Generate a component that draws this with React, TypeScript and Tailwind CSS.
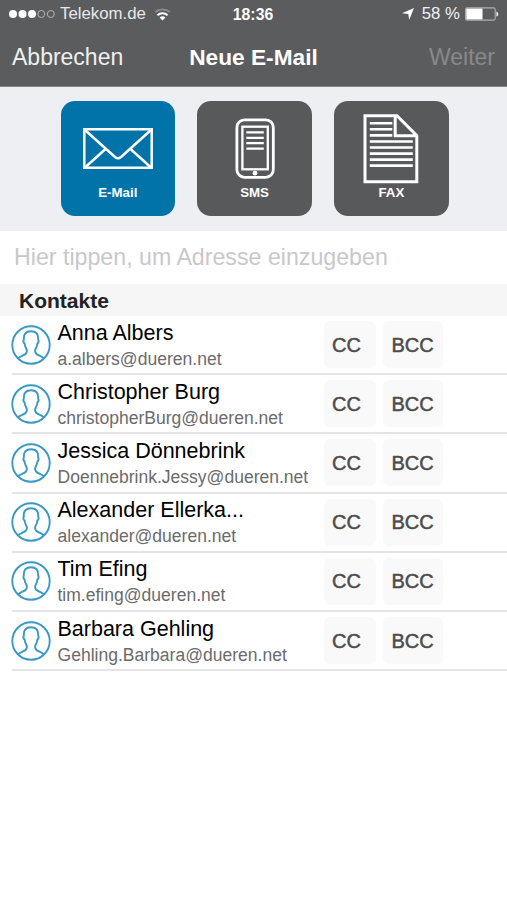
import clsx from 'clsx';

const contacts = [
  { name: 'Anna Albers', email: 'a.albers@dueren.net' },
  { name: 'Christopher Burg', email: 'christopherBurg@dueren.net' },
  { name: 'Jessica Dönnebrink', email: 'Doennebrink.Jessy@dueren.net' },
  { name: 'Alexander Ellerka...', email: 'alexander@dueren.net' },
  { name: 'Tim Efing', email: 'tim.efing@dueren.net' },
  { name: 'Barbara Gehling', email: 'Gehling.Barbara@dueren.net' },
];

const SignalDots = () => (
  <svg width="46" height="10" viewBox="0 0 46 10" fill="none">
    <circle cx="4" cy="5" r="4" fill="#fff" />
    <circle cx="13.5" cy="5" r="4" fill="#fff" />
    <circle cx="23" cy="5" r="4" fill="#fff" />
    <circle cx="32.3" cy="5" r="3.5" stroke="#b5b5b7" />
    <circle cx="41.8" cy="5" r="3.5" stroke="#b5b5b7" />
  </svg>
);

const WifiIcon = () => (
  <svg width="17" height="13" viewBox="0 0 17 13" fill="none">
    <path d="M1 4.2a11.2 11.2 0 0 1 15 0" stroke="#8c8c8e" strokeWidth="1.8" />
    <path d="M3.4 7.2a7.4 7.4 0 0 1 10.2 0" stroke="#fff" strokeWidth="2" />
    <path d="M5.6 9.6a4.200 4.200 0 0 1 5.800 0L8.500 12.600z" fill="#fff" />
  </svg>
);

const LocationIcon = () => (
  <svg width="12" height="12" viewBox="0 0 12 12">
    <path d="M12 0 7.200 12 6.300 5.900 0 5.200z" fill="#fff" />
  </svg>
);

const BatteryIcon = () => (
  <svg width="34" height="14" viewBox="0 0 34 14" fill="none">
    <rect x="0.6" y="0.9" width="29.6" height="12.2" rx="1.5" stroke="#b0b0b2" strokeWidth="1.1" />
    <rect x="1.3" y="1.6" width="16.2" height="10.8" fill="#fff" />
    <path d="M31.5 4.4c2.2.9 2.2 4.3 0 5.2z" fill="#fff" />
  </svg>
);

const MailIcon = () => (
  <svg width="70" height="84" viewBox="0 0 70 84" fill="none" stroke="#fff" strokeWidth="2.5">
    <path d="M1.3 28.3h67.4v38.4H1.3z" />
    <path d="M2 29 32 56q3 2.4 6 0L68 29M2 66.5 22.5 48M68 66.5 47.5 48" />
  </svg>
);

const PhoneIcon = () => (
  <svg width="40" height="84" viewBox="0 0 40 84" fill="none" stroke="#fff">
    <rect x="1.9" y="18.9" width="36.4" height="57.4" rx="7.5" strokeWidth="2.8" />
    <rect x="7.4" y="25.7" width="25.4" height="42.6" strokeWidth="2.3" />
    <path d="M11.3 31.4h17.5M11.3 36.8h17.5M11.3 42.2h17.5M11.3 47.6h17.5" strokeWidth="2.3" />
    <circle cx="20" cy="72.2" r="2.4" fill="#fff" stroke="none" />
  </svg>
);

const FaxIcon = () => (
  <svg width="56" height="84" viewBox="0 0 56 84" fill="none" stroke="#fff" strokeWidth="3">
    <path d="M2 14.7h32L53.8 34.7v46H2z" />
    <path d="M32.2 14.7v20h21" />
    <path
      d="M6.8 22.3h22.5M6.8 28.3h22.5M6.8 34.4h22.5M6.8 40.5h43M6.8 46.5h43M6.8 52.6h43M6.8 58.6h43M6.8 64.6h43"
      strokeWidth="2.6"
    />
  </svg>
);

const AvatarIcon = () => (
  <svg
    width="40"
    height="40"
    viewBox="0 0 40 40"
    fill="none"
    stroke="#3a98c6"
    strokeWidth="1.9"
    className="shrink-0"
  >
    <circle cx="20" cy="20" r="18.7" />
    <path d="M6.8 33.3c2.600-2 6.800-3.200 8.200-4.800 1.400-1.700.9-4-.1-5.700-.8-1.300-1.200-2.800-1.300-4.300-1.400-1-1.300-3-.8-4.200C12.300 8.800 15.200 6.300 20 6.300s7.700 2.500 7.200 8c.5 1.200.6 3.200-.8 4.200-.1 1.500-.5 3-1.300 4.300-1 1.700-1.500 4-.1 5.700 1.400 1.600 5.600 2.800 8.200 4.800" />
  </svg>
);

const channels = [
  { label: 'E-Mail', icon: <MailIcon />, active: true },
  { label: 'SMS', icon: <PhoneIcon />, active: false },
  { label: 'FAX', icon: <FaxIcon />, active: false },
];

const StatusBar = () => (
  <div className="grid h-7 grid-cols-[1fr_auto_1fr] items-center pl-[9px] pr-[8px] leading-7">
    <div className="flex items-center">
      <SignalDots />
      <span className="ml-[5px] text-[16.8px] text-[#e8e8e8]">Telekom.de</span>
      <span className="ml-[8px]">
        <WifiIcon />
      </span>
    </div>
    <span className="-ml-[2px] pt-px text-[15.800px] font-bold leading-[27px]">18:36</span>
    <div className="flex items-center justify-end">
      <LocationIcon />
      <span className="ml-[8px] mr-[5px] text-[16.800px] text-[#f0f0f0]">58 %</span>
      <BatteryIcon />
    </div>
  </div>
);

const ContactRow = ({ name, email }: { name: string; email: string }) => (
  <li className="ml-[12px] flex h-[59.2px] items-center border-b-2 border-[#e4e4e5]">
    <div className="-ml-[1.5px] flex">
      <AvatarIcon />
    </div>
    <div className="ml-[7px] w-[266px] whitespace-nowrap">
      <div className="text-[21.5px] leading-[28px] text-black">{name}</div>
      <div className="text-[17.55px] leading-[24px] text-[#6b6b6b]">{email}</div>
    </div>
    <button className="h-[47px] w-[52px] rounded-md bg-[#f9f9f9] pr-[6px] text-[20px] text-[#4c4c4c] [-webkit-text-stroke:0.5px_#4c4c4c]">
      CC
    </button>
    <button className="ml-[7px] h-[47px] w-[60px] rounded-md bg-[#f9f9f9] text-[20px] text-[#4c4c4c] [-webkit-text-stroke:0.5px_#4c4c4c]">
      BCC
    </button>
  </li>
);

export default function App() {
  return (
    <div className="h-[900px] w-[507px] overflow-hidden bg-white font-['Liberation_Sans',Arial,sans-serif]">
      <header className="h-[87px] border-b border-[#85868a] bg-[#5b5c5e] text-white">
        <StatusBar />
        <div className="grid h-[59px] grid-cols-[1fr_auto_1fr] items-center px-[12px] text-[23px]">
          <span className="text-[#f0f0f0]">Abbrechen</span>
          <span className="text-[22.7px] font-bold">Neue E-Mail</span>
          <span className="text-right text-[#88898b]">Weiter</span>
        </div>
      </header>

      <div className="flex h-[144px] gap-[22.4px] bg-[#edeff3] pl-[60.6px] pt-[14px]">
        {channels.map(({ label, icon, active }) => (
          <button
            key={label}
            className={clsx(
              'flex h-[115px] w-[114.4px] flex-col items-center rounded-[14px] text-white',
              active ? 'bg-[#0273a9]' : 'bg-[#58595b]',
            )}
          >
            {icon}
            <span className="text-[13.3px] font-bold leading-[15px]">{label}</span>
          </button>
        ))}
      </div>

      <div className="flex h-[53px] items-center pl-[14px] text-[23.2px] text-[#c8c8cb]">
        Hier tippen, um Adresse einzugeben
      </div>

      <h2 className="h-8 bg-[#f6f6f6] pl-[19px] text-[21px] font-bold leading-[33px] text-[#222]">
        Kontakte
      </h2>

      <ul>
        {contacts.map((contact) => (
          <ContactRow key={contact.email} {...contact} />
        ))}
      </ul>
    </div>
  );
}
